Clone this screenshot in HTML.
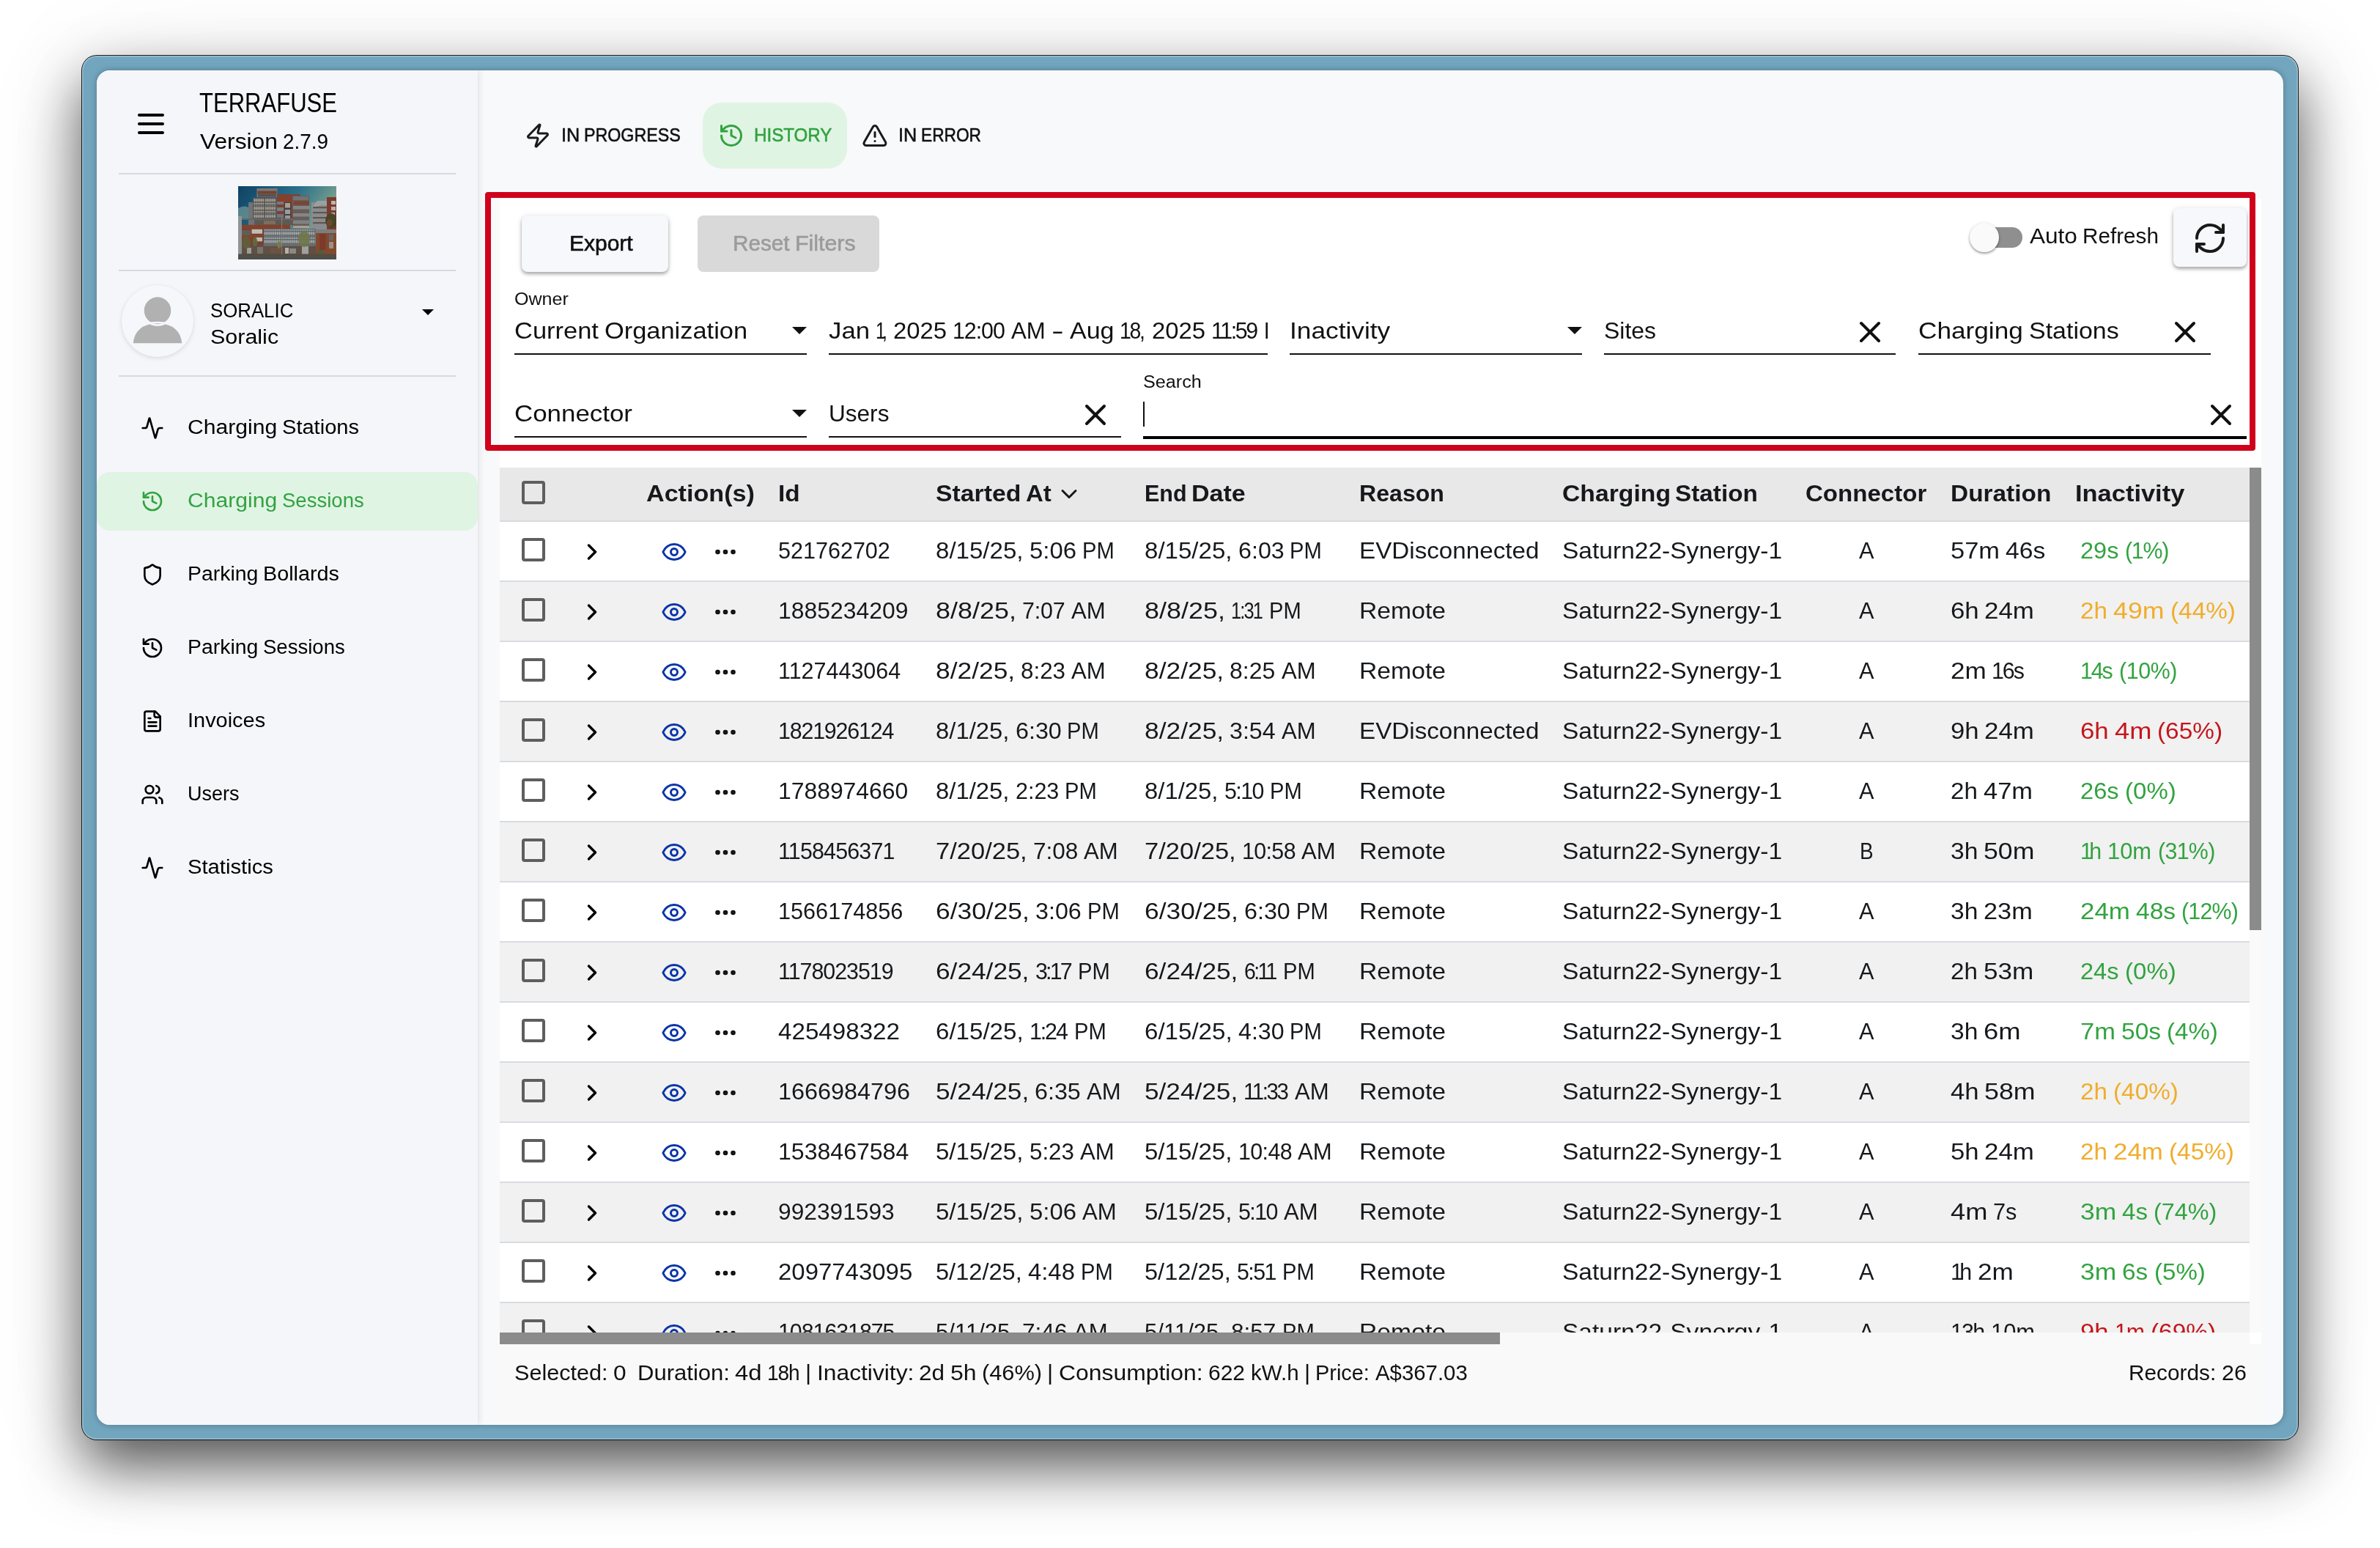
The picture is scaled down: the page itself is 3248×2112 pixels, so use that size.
<!DOCTYPE html>
<html lang="en"><head><meta charset="utf-8"><title>Charging Sessions - History</title>
<style>
html,body{margin:0;padding:0;background:#fff}
#root{position:relative;width:3248px;height:2112px;overflow:hidden;background:#fff;font-family:"Liberation Sans",sans-serif}
#root div,svg.ic,span.t{position:absolute}
span.t{white-space:pre;line-height:1;transform-origin:0 50%;display:block}
.win{left:112px;top:76px;width:3024px;height:1888px;border-radius:20px;background:#72a6bf;
 box-shadow:0 0 0 1px rgba(0,0,0,.88),inset 0 0 0 1.500px rgba(255,255,255,.30),0 36px 80px rgba(0,0,0,.67),0 0 180px rgba(0,0,0,.055)}
.app{left:132px;top:96px;width:2984px;height:1848px;border-radius:18px;overflow:hidden;background:#f8f9fa;box-shadow:0 0 10px rgba(0,0,0,.28)}
</style></head>
<body>
<div id="root">
<div class="win"></div>
<div class="app">
<div class="sb" style="left:0px;top:0px;width:520px;height:1848px;background:#f5f6fa;box-shadow:2px 0 8px rgba(0,0,0,.10)"></div><svg class="ic" style="left:50.00px;top:49.00px" width="48" height="48" viewBox="0 0 24 24" fill="none" stroke="#000" stroke-width="2" stroke-linecap="round" stroke-linejoin="round"><path d="M4 12h16"/><path d="M4 6h16"/><path d="M4 18h16"/></svg><span class="t" style="left:140.00px;top:26px;font-size:37.08px;font-weight:400;color:#000;transform:scaleX(0.8373);">TERRAFUSE</span><span class="t" style="left:140.50px;top:82px;font-size:29.36px;font-weight:400;color:#000;transform:scaleX(1.0817);">Version </span><span class="t" style="left:254.05px;top:82px;font-size:29.36px;font-weight:400;color:#000;transform:scaleX(0.9474);">2.7.9</span><div style="left:30px;top:140px;width:460px;height:2px;background:#d6d9df"></div><div style="left:30px;top:272px;width:460px;height:2px;background:#d6d9df"></div><div style="left:30px;top:416px;width:460px;height:2px;background:#d6d9df"></div><svg class="ic" style="left:193px;top:158px" width="134" height="100" viewBox="0 0 134 100">
<defs><linearGradient id="sky" x1="0" y1="0" x2="1" y2=".55"><stop offset="0" stop-color="#0c466f"/><stop offset=".5" stop-color="#2f7f9a"/><stop offset=".8" stop-color="#7fae9f"/><stop offset="1" stop-color="#c9c58e"/></linearGradient>
<pattern id="w1" width="3" height="5.500" patternUnits="userSpaceOnUse"><rect width="3" height="5.500" fill="#55585d"/><rect x=".4" y=".5" width="2.200" height="4.200" fill="#c7b8a6"/></pattern>
<pattern id="w2" width="2.900" height="5.600" patternUnits="userSpaceOnUse"><rect width="2.900" height="5.600" fill="#5d6166"/><rect x=".5" y=".6" width="1.900" height="4.300" fill="#cdd0d2"/></pattern><filter id="bl" x="0" y="0" width="1" height="1"><feGaussianBlur stdDeviation=".45"/></filter></defs>
<g filter="url(#bl)"><rect width="134" height="100" fill="url(#sky)"/>
<path d="M0 30q10-6 18 2v14H0z" fill="#9fc4b4" opacity=".55"/>
<rect x="100" y="22" width="24" height="40" fill="#9c9fa2"/><path d="M100 30l8-10h16v6h-12z" fill="#b1b4b6"/>
<rect x="102" y="28" width="20" height="2.200" fill="#6e6058"/><rect x="102" y="35" width="20" height="2.200" fill="#6e6058"/><rect x="102" y="42" width="20" height="2.200" fill="#6e6058"/><rect x="102" y="49" width="20" height="2.200" fill="#6e6058"/>
<rect x="121" y="15" width="13" height="50" fill="#8a3f30"/><rect x="127" y="20" width="6" height="5" fill="#d6cfc9"/><rect x="127" y="28" width="6" height="5" fill="#d0c9c3"/><rect x="127" y="36" width="5" height="4" fill="#cfc8c2"/>
<rect x="14" y="22" width="8" height="32" fill="#7d8185"/>
<rect x="25.500" y="3" width="28" height="12" fill="#84878b"/><rect x="26.500" y="6.500" width="26" height="3.800" fill="#8a4632"/><rect x="27" y="10.500" width="25" height="4" fill="#5f5a55"/>
<rect x="20" y="15.500" width="32.500" height="29" fill="#585b60"/><rect x="21" y="16.500" width="30.500" height="27" fill="url(#w1)"/>
<rect x="20" y="24.800" width="32.500" height="1.600" fill="#6b6e72"/><rect x="20" y="35.800" width="32.500" height="1.600" fill="#6b6e72"/><rect x="35.300" y="15.500" width="1.300" height="29" fill="#55585d"/>
<rect x="53" y="11" width="32" height="34" fill="#8c4533"/><rect x="54" y="11" width="20" height="10" fill="#95462f"/>
<rect x="53" y="21" width="9" height="4" fill="#85888b"/><rect x="53" y="29" width="9" height="5" fill="#8b8e91"/><rect x="53" y="38" width="9" height="5" fill="#7f8386"/>
<rect x="63" y="22" width="9" height="22" fill="#45484d"/><rect x="64" y="23" width="7" height="6.500" fill="#bfb2a5"/><rect x="64" y="32" width="7" height="6" fill="#aeb0b4"/><rect x="64" y="40" width="7" height="4" fill="#a9abb0"/>
<rect x="74" y="13" width="23" height="42" fill="#74665c"/><rect x="75" y="14" width="21" height="5" fill="#7e8185"/><rect x="76" y="20.500" width="21" height="5" fill="#8a4a36"/>
<rect x="75" y="27" width="23" height="4.500" fill="#94979a"/><rect x="75" y="37" width="23" height="4.500" fill="#94979a"/><rect x="75" y="46.500" width="23" height="5" fill="#8e9194"/>
<rect x="0" y="44" width="74" height="2" fill="#6f7377"/><rect x="0" y="41" width="5" height="52" fill="#a4a7a9"/>
<rect x="22" y="46" width="52" height="7" fill="#6b625b"/><rect x="35" y="47" width="16" height="5" fill="#8d7a63"/>
<rect x="5" y="52.700" width="66" height="5.500" fill="#93492f"/>
<rect x="5" y="58" width="30" height="24" fill="#8a4431"/><rect x="5" y="60" width="12" height="7" fill="#6d6762"/>
<rect x="18.500" y="58.800" width="14.500" height="6" fill="#ddd5cc"/><rect x="24.500" y="69.800" width="8.500" height="5.500" fill="#dad2c9"/><rect x="5" y="67" width="28" height="3" fill="#954a31"/>
<rect x="34.500" y="58" width="71" height="22" fill="#5d6166"/><rect x="35.300" y="58.800" width="69.500" height="9.700" fill="url(#w2)"/><rect x="35.300" y="69.700" width="69.500" height="9.700" fill="url(#w2)"/>
<rect x="75" y="54" width="22" height="3" fill="#bdb4a6"/>
<rect x="106" y="59" width="28" height="5" fill="#8b8d90"/><rect x="106" y="64" width="28" height="30" fill="#94502f"/><rect x="111" y="65" width="8.500" height="22" fill="#8b3e2c"/><rect x="124" y="66" width="6" height="8" fill="#77706a"/><rect x="124" y="76" width="6" height="9" fill="#a9a39c"/>
<rect x="5" y="80" width="101" height="13" fill="#6a574b"/><rect x="34.500" y="80" width="71" height="1.800" fill="#777a7d"/>
<rect x="64" y="84" width="5" height="8" fill="#cfc9c1"/><rect x="70" y="85" width="9" height="7" fill="#9b9a99"/><rect x="87" y="82" width="9" height="11" fill="#b5b5b4"/><rect x="26" y="83" width="8" height="9" fill="#8c7f78"/><rect x="12" y="84" width="6" height="8" fill="#b4b1ad"/><rect x="44" y="84" width="14" height="8" fill="#7a5a49"/>
<rect x="0" y="92.500" width="134" height="2.500" fill="#5d5449"/><rect x="0" y="95" width="134" height="5" fill="#58544f"/>
<ellipse cx="127" cy="47" rx="8" ry="10" fill="#4e4a2c"/><ellipse cx="125" cy="50" rx="4" ry="5" fill="#7a4f2b"/>
<ellipse cx="90" cy="72" rx="8" ry="11" fill="#7c8550" opacity=".9"/><ellipse cx="11" cy="77" rx="6" ry="8" fill="#6b6a3f" opacity=".9"/><ellipse cx="23" cy="76" rx="3.500" ry="6" fill="#6f7a45" opacity=".85"/><ellipse cx="56" cy="80" rx="3" ry="5" fill="#8a8a4c" opacity=".85"/><ellipse cx="113" cy="90" rx="4" ry="3" fill="#55683c"/>
<rect x="59.300" y="42" width=".8" height="51" fill="#9a9c9e"/>
<rect width="134" height="100" fill="#1d2026" opacity=".14"/></g>
</svg><div style="left:34px;top:293px;width:98px;height:98px;border-radius:50%;background:#f6f7fa;box-shadow:0 2px 6px rgba(0,0,0,.10),0 0 2px rgba(0,0,0,.06);overflow:hidden"><svg class="ic" style="left:0;top:0" width="98" height="98" viewBox="0 0 96 96"><circle cx="48" cy="34" r="18" fill="#b1b1b1"/><path d="M14 79c1-18 13-29 34-29s33 11 34 29z" fill="#b1b1b1" stroke="#f6f7fa" stroke-width="2.500"/><circle cx="48" cy="34" r="19.500" fill="none" stroke="#f6f7fa" stroke-width="2.500"/></svg></div><span class="t" style="left:154.50px;top:313px;font-size:28.43px;font-weight:400;color:#000;transform:scaleX(0.9078);">SORALIC</span><span class="t" style="left:154.50px;top:349px;font-size:28.43px;font-weight:400;color:#000;transform:scaleX(1.0719);">Soralic</span><svg class="ic" style="left:444px;top:326px" width="16" height="8" viewBox="0 0 16 8"><path d="M0 0h16l-8 8z" fill="#000"/></svg><svg class="ic" style="left:60.00px;top:472.00px" width="32" height="32" viewBox="0 0 24 24" fill="none" stroke="#000" stroke-width="2" stroke-linecap="round" stroke-linejoin="round"><path d="M22 12h-2.48a2 2 0 0 0-1.93 1.46l-2.35 8.36a.25.25 0 0 1-.48 0L9.24 2.18a.25.25 0 0 0-.48 0l-2.35 8.36A2 2 0 0 1 4.49 12H2"/></svg><span class="t" style="left:124.00px;top:474px;font-size:26.78px;font-weight:400;color:#000;transform:scaleX(1.1249);">Charging </span><span class="t" style="left:253.12px;top:474px;font-size:26.78px;font-weight:400;color:#000;transform:scaleX(1.0858);">Stations</span><div style="left:0px;top:548px;width:520px;height:80px;background:#e0f4e4;border-radius:18px"></div><svg class="ic" style="left:60.00px;top:572.00px" width="32" height="32" viewBox="0 0 24 24" fill="none" stroke="#32a340" stroke-width="2" stroke-linecap="round" stroke-linejoin="round"><path d="M3 12a9 9 0 1 0 9-9 9.75 9.75 0 0 0-6.74 2.74L3 8"/><path d="M3 3v5h5"/><path d="M12 7v5l4 2"/></svg><span class="t" style="left:124.00px;top:574px;font-size:26.78px;font-weight:400;color:#32a340;transform:scaleX(1.1249);">Charging </span><span class="t" style="left:253.12px;top:574px;font-size:26.78px;font-weight:400;color:#32a340;transform:scaleX(1.0292);">Sessions</span><svg class="ic" style="left:60.00px;top:672.00px" width="32" height="32" viewBox="0 0 24 24" fill="none" stroke="#000" stroke-width="2" stroke-linecap="round" stroke-linejoin="round"><path d="M20 13c0 5-3.5 7.5-7.66 8.95a1 1 0 0 1-.67-.01C7.5 20.5 4 18 4 13V6a1 1 0 0 1 1-1c2 0 4.500-1.200 6.240-2.720a1.170 1.170 0 0 1 1.520 0C14.510 3.810 17 5 19 5a1 1 0 0 1 1 1z"/></svg><span class="t" style="left:124.00px;top:674px;font-size:26.78px;font-weight:400;color:#000;transform:scaleX(1.0615);">Parking </span><span class="t" style="left:227.28px;top:674px;font-size:26.78px;font-weight:400;color:#000;transform:scaleX(1.0734);">Bollards</span><svg class="ic" style="left:60.00px;top:772.00px" width="32" height="32" viewBox="0 0 24 24" fill="none" stroke="#000" stroke-width="2" stroke-linecap="round" stroke-linejoin="round"><path d="M3 12a9 9 0 1 0 9-9 9.75 9.75 0 0 0-6.74 2.74L3 8"/><path d="M3 3v5h5"/><path d="M12 7v5l4 2"/></svg><span class="t" style="left:124.00px;top:774px;font-size:26.78px;font-weight:400;color:#000;transform:scaleX(1.0615);">Parking </span><span class="t" style="left:227.28px;top:774px;font-size:26.78px;font-weight:400;color:#000;transform:scaleX(1.0292);">Sessions</span><svg class="ic" style="left:60.00px;top:872.00px" width="32" height="32" viewBox="0 0 24 24" fill="none" stroke="#000" stroke-width="2" stroke-linecap="round" stroke-linejoin="round"><path d="M15 2H6a2 2 0 0 0-2 2v16a2 2 0 0 0 2 2h12a2 2 0 0 0 2-2V7Z"/><path d="M14 2v4a2 2 0 0 0 2 2h4"/><path d="M10 9H8"/><path d="M16 13H8"/><path d="M16 17H8"/></svg><span class="t" style="left:124.00px;top:874px;font-size:26.78px;font-weight:400;color:#000;transform:scaleX(1.0808);">Invoices</span><svg class="ic" style="left:60.00px;top:972.00px" width="32" height="32" viewBox="0 0 24 24" fill="none" stroke="#000" stroke-width="2" stroke-linecap="round" stroke-linejoin="round"><path d="M16 21v-2a4 4 0 0 0-4-4H6a4 4 0 0 0-4 4v2"/><circle cx="9" cy="7" r="4"/><path d="M22 21v-2a4 4 0 0 0-3-3.870"/><path d="M16 3.130a4 4 0 0 1 0 7.750"/></svg><span class="t" style="left:124.00px;top:974px;font-size:26.78px;font-weight:400;color:#000;transform:scaleX(1.0087);">Users</span><svg class="ic" style="left:60.00px;top:1072.00px" width="32" height="32" viewBox="0 0 24 24" fill="none" stroke="#000" stroke-width="2" stroke-linecap="round" stroke-linejoin="round"><path d="M22 12h-2.48a2 2 0 0 0-1.93 1.46l-2.35 8.36a.25.25 0 0 1-.48 0L9.24 2.18a.25.25 0 0 0-.48 0l-2.35 8.36A2 2 0 0 1 4.49 12H2"/></svg><span class="t" style="left:124.00px;top:1074px;font-size:26.78px;font-weight:400;color:#000;transform:scaleX(1.0921);">Statistics</span><svg class="ic" style="left:584.00px;top:71.00px" width="36" height="36" viewBox="0 0 24 24" fill="none" stroke="#1a1a1a" stroke-width="2" stroke-linecap="round" stroke-linejoin="round"><path d="M4 14a1 1 0 0 1-.78-1.630l9.900-10.200a.5.5 0 0 1 .86.460l-1.920 6.020A1 1 0 0 0 13 10h7a1 1 0 0 1 .78 1.630l-9.900 10.200a.5.5 0 0 1-.86-.460l1.920-6.020A1 1 0 0 0 11 14z"/></svg><span class="t" style="left:633.50px;top:75px;font-size:26.37px;font-weight:400;color:#111;transform:scaleX(0.9562);-webkit-text-stroke:.6px #111;">IN </span><span class="t" style="left:665.38px;top:75px;font-size:26.37px;font-weight:400;color:#111;transform:scaleX(0.8819);-webkit-text-stroke:.6px #111;">PROGRESS</span><div style="left:827px;top:44px;width:197px;height:90px;background:#e0f4e4;border-radius:26px"></div><svg class="ic" style="left:848.00px;top:71.00px" width="36" height="36" viewBox="0 0 24 24" fill="none" stroke="#32a340" stroke-width="2" stroke-linecap="round" stroke-linejoin="round"><path d="M3 12a9 9 0 1 0 9-9 9.75 9.75 0 0 0-6.74 2.74L3 8"/><path d="M3 3v5h5"/><path d="M12 7v5l4 2"/></svg><span class="t" style="left:897.00px;top:75px;font-size:26.37px;font-weight:400;color:#32a340;transform:scaleX(0.9157);-webkit-text-stroke:.6px #32a340;">HISTORY</span><svg class="ic" style="left:1044.00px;top:71.00px" width="36" height="36" viewBox="0 0 24 24" fill="none" stroke="#1a1a1a" stroke-width="2" stroke-linecap="round" stroke-linejoin="round"><path d="m21.730 18-8-14a2 2 0 0 0-3.480 0l-8 14A2 2 0 0 0 4 21h16a2 2 0 0 0 1.730-3"/><path d="M12 9v4"/><path d="M12 17h.01"/></svg><span class="t" style="left:1093.50px;top:75px;font-size:26.37px;font-weight:400;color:#111;transform:scaleX(0.9562);-webkit-text-stroke:.6px #111;">IN </span><span class="t" style="left:1125.38px;top:75px;font-size:26.37px;font-weight:400;color:#111;transform:scaleX(0.8615);-webkit-text-stroke:.6px #111;">ERROR</span><div style="left:550px;top:176px;width:2404px;height:1562px;background:#fff"></div><div style="left:580px;top:198px;width:200px;height:77px;background:#f7f8fb;border-radius:8px;box-shadow:0 3px 4px rgba(0,0,0,.28),0 1px 8px rgba(0,0,0,.12)"></div><span class="t" style="left:645.16px;top:222px;font-size:28.84px;font-weight:400;color:#111;transform:scaleX(1.0401);-webkit-text-stroke:.6px #111;">Export</span><div style="left:820px;top:198px;width:248px;height:77px;background:#d9d9d9;border-radius:8px"></div><span class="t" style="left:868.25px;top:222px;font-size:28.84px;font-weight:400;color:#9b9b9b;transform:scaleX(1.0307);-webkit-text-stroke:.6px #9b9b9b;">Reset </span><span class="t" style="left:953.16px;top:222px;font-size:28.84px;font-weight:400;color:#9b9b9b;transform:scaleX(1.0526);-webkit-text-stroke:.6px #9b9b9b;">Filters</span><div style="left:2560px;top:214px;width:68px;height:28px;background:#8f8f8f;border-radius:14px"></div><div style="left:2556px;top:208px;width:40px;height:40px;background:#fafafa;border-radius:50%;box-shadow:0 2px 3px rgba(0,0,0,.3),0 1px 5px rgba(0,0,0,.14)"></div><span class="t" style="left:2638.00px;top:212px;font-size:28.84px;font-weight:400;color:#111;transform:scaleX(1.0943);">Auto </span><span class="t" style="left:2710.39px;top:212px;font-size:28.84px;font-weight:400;color:#111;transform:scaleX(1.0296);">Refresh</span><div style="left:2834px;top:188px;width:100px;height:80px;background:#f7f8fb;border-radius:8px;box-shadow:0 3px 4px rgba(0,0,0,.28),0 1px 8px rgba(0,0,0,.12)"></div><svg class="ic" style="left:2860.00px;top:204.50px" width="48" height="48" viewBox="0 0 24 24" fill="none" stroke="#1a1a1a" stroke-width="2" stroke-linecap="round" stroke-linejoin="round"><path d="M3 12a9 9 0 0 1 9-9 9.750 9.750 0 0 1 6.740 2.740L21 8"/><path d="M21 3v5h-5"/><path d="M21 12a9 9 0 0 1-9 9 9.750 9.750 0 0 1-6.740-2.740L3 16"/><path d="M8 16H3v5"/></svg><div style="left:570px;top:386px;width:399px;height:2px;background:#111"></div><span class="t" style="left:570.00px;top:340px;font-size:31.31px;font-weight:400;color:#111;transform:scaleX(1.1015);">Current </span><span class="t" style="left:693.06px;top:340px;font-size:31.31px;font-weight:400;color:#111;transform:scaleX(1.0992);">Organization</span><span class="t" style="left:570.00px;top:301px;font-size:23.48px;font-weight:400;color:#111;transform:scaleX(1.0683);">Owner</span><svg class="ic" style="left:949px;top:349.5px" width="20" height="10" viewBox="0 0 20 10"><path d="M0 0h20l-10 10z" fill="#111"/></svg><div style="left:999px;top:386px;width:599px;height:2px;background:#111"></div><div style="left:999px;top:324px;width:599px;height:60px;overflow:hidden"><span class="t" style="left:0.00px;top:16px;font-size:31.31px;font-weight:400;color:#111;transform:scaleX(1.1118);">Jan </span><span class="t" style="left:64.22px;top:16px;font-size:31.31px;font-weight:400;color:#111;transform:scaleX(0.7811);letter-spacing:-5.95px;">1, </span><span class="t" style="left:88.08px;top:16px;font-size:31.31px;font-weight:400;color:#111;transform:scaleX(1.0503);">2025 </span><span class="t" style="left:169.31px;top:16px;font-size:31.31px;font-weight:400;color:#111;transform:scaleX(0.9711);letter-spacing:-1.09px;">12:00 </span><span class="t" style="left:249.27px;top:16px;font-size:31.31px;font-weight:400;color:#111;transform:scaleX(0.9937);">AM </span><span class="t" style="left:304.03px;top:16px;font-size:31.31px;font-weight:400;color:#111;transform:scaleX(1.6048);">- </span><span class="t" style="left:328.89px;top:16px;font-size:31.31px;font-weight:400;color:#111;transform:scaleX(1.0861);">Aug </span><span class="t" style="left:397.48px;top:16px;font-size:31.31px;font-weight:400;color:#111;transform:scaleX(0.9078);letter-spacing:-2.52px;">18, </span><span class="t" style="left:440.52px;top:16px;font-size:31.31px;font-weight:400;color:#111;transform:scaleX(1.0503);">2025 </span><span class="t" style="left:521.75px;top:16px;font-size:31.31px;font-weight:400;color:#111;transform:scaleX(0.9711);letter-spacing:-2.48px;">11:59 </span><span class="t" style="left:594.03px;top:16px;font-size:31.31px;font-weight:400;color:#111;transform:scaleX(0.9321);">PM</span></div><div style="left:1628px;top:386px;width:399px;height:2px;background:#111"></div><span class="t" style="left:1628.00px;top:340px;font-size:31.31px;font-weight:400;color:#111;transform:scaleX(1.1265);">Inactivity</span><svg class="ic" style="left:2007px;top:349.5px" width="20" height="10" viewBox="0 0 20 10"><path d="M0 0h20l-10 10z" fill="#111"/></svg><div style="left:2057px;top:386px;width:398px;height:2px;background:#111"></div><span class="t" style="left:2057.00px;top:340px;font-size:31.31px;font-weight:400;color:#111;transform:scaleX(1.0218);">Sites</span><svg class="ic" style="left:2396.00px;top:332.50px" width="48" height="48" viewBox="0 0 24 24" fill="none" stroke="#111" stroke-width="2" stroke-linecap="round" stroke-linejoin="round"><path d="M18 6 6 18"/><path d="m6 6 12 12"/></svg><div style="left:2486px;top:386px;width:399px;height:2px;background:#111"></div><span class="t" style="left:2486.00px;top:340px;font-size:31.31px;font-weight:400;color:#111;transform:scaleX(1.1244);">Charging </span><span class="t" style="left:2636.92px;top:340px;font-size:31.31px;font-weight:400;color:#111;transform:scaleX(1.0854);">Stations</span><svg class="ic" style="left:2826.00px;top:332.50px" width="48" height="48" viewBox="0 0 24 24" fill="none" stroke="#111" stroke-width="2" stroke-linecap="round" stroke-linejoin="round"><path d="M18 6 6 18"/><path d="m6 6 12 12"/></svg><div style="left:570px;top:499px;width:399px;height:2px;background:#111"></div><span class="t" style="left:570.00px;top:453px;font-size:31.31px;font-weight:400;color:#111;transform:scaleX(1.1146);">Connector</span><svg class="ic" style="left:949px;top:462.5px" width="20" height="10" viewBox="0 0 20 10"><path d="M0 0h20l-10 10z" fill="#111"/></svg><div style="left:999px;top:499px;width:399px;height:2px;background:#111"></div><span class="t" style="left:999.00px;top:453px;font-size:31.31px;font-weight:400;color:#111;transform:scaleX(1.0084);">Users</span><svg class="ic" style="left:1339.00px;top:445.50px" width="48" height="48" viewBox="0 0 24 24" fill="none" stroke="#111" stroke-width="2" stroke-linecap="round" stroke-linejoin="round"><path d="M18 6 6 18"/><path d="m6 6 12 12"/></svg><div style="left:1428px;top:499px;width:1506px;height:4px;background:#000"></div><span class="t" style="left:1428.00px;top:414px;font-size:23.48px;font-weight:400;color:#111;transform:scaleX(1.0737);">Search</span><svg class="ic" style="left:2875.00px;top:446.00px" width="48" height="48" viewBox="0 0 24 24" fill="none" stroke="#111" stroke-width="2" stroke-linecap="round" stroke-linejoin="round"><path d="M18 6 6 18"/><path d="m6 6 12 12"/></svg><div style="left:1428px;top:452px;width:2px;height:34px;background:#111"></div><div class="tbl" style="left:550px;top:542px;width:2388px;height:1180px;overflow:hidden"><div style="left:0px;top:0px;width:2388px;height:72px;background:#e8e8e8"></div><div style="left:0px;top:72px;width:2388px;height:2px;background:#d9dbe1"></div><div style="left:30px;top:18px;width:32px;height:32px;border:4px solid #5e5e5e;border-radius:4px;box-sizing:border-box"></div><span class="t" style="left:200.00px;top:20px;font-size:31.31px;font-weight:700;color:#16181b;transform:scaleX(1.0904);">Action(s)</span><span class="t" style="left:380.00px;top:20px;font-size:31.31px;font-weight:700;color:#16181b;transform:scaleX(1.0640);">Id</span><span class="t" style="left:595.00px;top:20px;font-size:31.31px;font-weight:700;color:#16181b;transform:scaleX(1.0793);">Started </span><span class="t" style="left:717.81px;top:20px;font-size:31.31px;font-weight:700;color:#16181b;transform:scaleX(1.0520);">At</span><svg class="ic" style="left:759.00px;top:18.00px" width="36" height="36" viewBox="0 0 24 24" fill="none" stroke="#16181b" stroke-width="2" stroke-linecap="round" stroke-linejoin="round"><path d="m6 9 6 6 6-6"/></svg><span class="t" style="left:880.00px;top:20px;font-size:31.31px;font-weight:700;color:#16181b;transform:scaleX(0.9736);">End </span><span class="t" style="left:944.02px;top:20px;font-size:31.31px;font-weight:700;color:#16181b;transform:scaleX(1.0877);">Date</span><span class="t" style="left:1172.50px;top:20px;font-size:31.31px;font-weight:700;color:#16181b;transform:scaleX(1.0258);">Reason</span><span class="t" style="left:1450.00px;top:20px;font-size:31.31px;font-weight:700;color:#16181b;transform:scaleX(1.0776);">Charging </span><span class="t" style="left:1604.45px;top:20px;font-size:31.31px;font-weight:700;color:#16181b;transform:scaleX(1.0636);">Station</span><span class="t" style="left:1782.35px;top:20px;font-size:31.31px;font-weight:700;color:#16181b;transform:scaleX(1.0562);">Connector</span><span class="t" style="left:1979.50px;top:20px;font-size:31.31px;font-weight:700;color:#16181b;transform:scaleX(1.0676);">Duration</span><span class="t" style="left:2150.00px;top:20px;font-size:31.31px;font-weight:700;color:#16181b;transform:scaleX(1.1005);">Inactivity</span><div style="left:0px;top:74px;width:2388px;height:80px;background:#fff"></div><div style="left:0px;top:154px;width:2388px;height:2px;background:#d9dbe1"></div><div style="left:30px;top:96px;width:32px;height:32px;border:4px solid #5e5e5e;border-radius:4px;box-sizing:border-box"></div><svg class="ic" style="left:108.00px;top:97.00px" width="36" height="36" viewBox="0 0 24 24" fill="none" stroke="#000" stroke-width="2.3" stroke-linecap="round" stroke-linejoin="round"><path d="m9 18 6-6-6-6"/></svg><svg class="ic" style="left:220.00px;top:97.00px" width="36" height="36" viewBox="0 0 24 24" fill="none" stroke="#0a35a8" stroke-width="2" stroke-linecap="round" stroke-linejoin="round"><path d="M2.062 12.348a1 1 0 0 1 0-.696 10.750 10.750 0 0 1 19.876 0 1 1 0 0 1 0 .696 10.750 10.750 0 0 1-19.876 0"/><circle cx="12" cy="12" r="3"/></svg><svg class="ic" style="left:290.00px;top:97.00px" width="36" height="36" viewBox="0 0 24 24" fill="none" stroke="#111" stroke-width="2.4" stroke-linecap="round" stroke-linejoin="round"><circle cx="12" cy="12" r="1"/><circle cx="19" cy="12" r="1"/><circle cx="5" cy="12" r="1"/></svg><span class="t" style="left:380.00px;top:98px;font-size:31.31px;font-weight:400;color:#16181b;transform:scaleX(0.9755);">521762702</span><span class="t" style="left:595.00px;top:98px;font-size:31.31px;font-weight:400;color:#16181b;transform:scaleX(1.0564);">8/15/25, </span><span class="t" style="left:722.62px;top:98px;font-size:31.31px;font-weight:400;color:#16181b;transform:scaleX(1.0498);">5:06 </span><span class="t" style="left:794.67px;top:98px;font-size:31.31px;font-weight:400;color:#16181b;transform:scaleX(0.9321);">PM</span><span class="t" style="left:880.00px;top:98px;font-size:31.31px;font-weight:400;color:#16181b;transform:scaleX(1.0564);">8/15/25, </span><span class="t" style="left:1007.62px;top:98px;font-size:31.31px;font-weight:400;color:#16181b;transform:scaleX(1.0303);">6:03 </span><span class="t" style="left:1078.48px;top:98px;font-size:31.31px;font-weight:400;color:#16181b;transform:scaleX(0.9321);">PM</span><span class="t" style="left:1172.50px;top:98px;font-size:31.31px;font-weight:400;color:#16181b;transform:scaleX(1.0610);">EVDisconnected</span><span class="t" style="left:1450.00px;top:98px;font-size:31.31px;font-weight:400;color:#16181b;transform:scaleX(1.0714);">Saturn22-Synergy-1</span><span class="t" style="left:1854.76px;top:98px;font-size:31.31px;font-weight:400;color:#16181b;transform:scaleX(0.9813);">A</span><span class="t" style="left:1979.50px;top:98px;font-size:31.31px;font-weight:400;color:#16181b;transform:scaleX(1.1001);">57m </span><span class="t" style="left:2054.61px;top:98px;font-size:31.31px;font-weight:400;color:#16181b;transform:scaleX(1.0755);">46s</span><span class="t" style="left:2157.00px;top:98px;font-size:31.31px;font-weight:400;color:#32a340;transform:scaleX(1.0402);">29s </span><span class="t" style="left:2217.61px;top:98px;font-size:31.31px;font-weight:400;color:#32a340;transform:scaleX(0.9711);letter-spacing:-1.30px;">(1%)</span><div style="left:0px;top:156px;width:2388px;height:80px;background:#f1f1f1"></div><div style="left:0px;top:236px;width:2388px;height:2px;background:#d9dbe1"></div><div style="left:30px;top:178px;width:32px;height:32px;border:4px solid #5e5e5e;border-radius:4px;box-sizing:border-box"></div><svg class="ic" style="left:108.00px;top:179.00px" width="36" height="36" viewBox="0 0 24 24" fill="none" stroke="#000" stroke-width="2.3" stroke-linecap="round" stroke-linejoin="round"><path d="m9 18 6-6-6-6"/></svg><svg class="ic" style="left:220.00px;top:179.00px" width="36" height="36" viewBox="0 0 24 24" fill="none" stroke="#0a35a8" stroke-width="2" stroke-linecap="round" stroke-linejoin="round"><path d="M2.062 12.348a1 1 0 0 1 0-.696 10.750 10.750 0 0 1 19.876 0 1 1 0 0 1 0 .696 10.750 10.750 0 0 1-19.876 0"/><circle cx="12" cy="12" r="3"/></svg><svg class="ic" style="left:290.00px;top:179.00px" width="36" height="36" viewBox="0 0 24 24" fill="none" stroke="#111" stroke-width="2.4" stroke-linecap="round" stroke-linejoin="round"><circle cx="12" cy="12" r="1"/><circle cx="19" cy="12" r="1"/><circle cx="5" cy="12" r="1"/></svg><span class="t" style="left:380.00px;top:180px;font-size:31.31px;font-weight:400;color:#16181b;transform:scaleX(1.0190);">1885234209</span><span class="t" style="left:595.00px;top:180px;font-size:31.31px;font-weight:400;color:#16181b;transform:scaleX(1.1479);">8/8/25, </span><span class="t" style="left:712.98px;top:180px;font-size:31.31px;font-weight:400;color:#16181b;transform:scaleX(0.9711);letter-spacing:-0.14px;">7:07 </span><span class="t" style="left:779.84px;top:180px;font-size:31.31px;font-weight:400;color:#16181b;transform:scaleX(0.9937);">AM</span><span class="t" style="left:880.00px;top:180px;font-size:31.31px;font-weight:400;color:#16181b;transform:scaleX(1.1479);">8/8/25, </span><span class="t" style="left:997.98px;top:180px;font-size:31.31px;font-weight:400;color:#16181b;transform:scaleX(0.8128);letter-spacing:-2.33px;">1:31 </span><span class="t" style="left:1049.92px;top:180px;font-size:31.31px;font-weight:400;color:#16181b;transform:scaleX(0.9321);">PM</span><span class="t" style="left:1172.50px;top:180px;font-size:31.31px;font-weight:400;color:#16181b;transform:scaleX(1.0766);">Remote</span><span class="t" style="left:1450.00px;top:180px;font-size:31.31px;font-weight:400;color:#16181b;transform:scaleX(1.0714);">Saturn22-Synergy-1</span><span class="t" style="left:1854.76px;top:180px;font-size:31.31px;font-weight:400;color:#16181b;transform:scaleX(0.9813);">A</span><span class="t" style="left:1979.50px;top:180px;font-size:31.31px;font-weight:400;color:#16181b;transform:scaleX(1.1131);">6h </span><span class="t" style="left:2026.38px;top:180px;font-size:31.31px;font-weight:400;color:#16181b;transform:scaleX(1.1152);">24m</span><span class="t" style="left:2157.00px;top:180px;font-size:31.31px;font-weight:400;color:#f0ad2c;transform:scaleX(1.0610);">2h </span><span class="t" style="left:2202.05px;top:180px;font-size:31.31px;font-weight:400;color:#f0ad2c;transform:scaleX(1.1427);">49m </span><span class="t" style="left:2279.72px;top:180px;font-size:31.31px;font-weight:400;color:#f0ad2c;transform:scaleX(1.0649);">(44%)</span><div style="left:0px;top:238px;width:2388px;height:80px;background:#fff"></div><div style="left:0px;top:318px;width:2388px;height:2px;background:#d9dbe1"></div><div style="left:30px;top:260px;width:32px;height:32px;border:4px solid #5e5e5e;border-radius:4px;box-sizing:border-box"></div><svg class="ic" style="left:108.00px;top:261.00px" width="36" height="36" viewBox="0 0 24 24" fill="none" stroke="#000" stroke-width="2.3" stroke-linecap="round" stroke-linejoin="round"><path d="m9 18 6-6-6-6"/></svg><svg class="ic" style="left:220.00px;top:261.00px" width="36" height="36" viewBox="0 0 24 24" fill="none" stroke="#0a35a8" stroke-width="2" stroke-linecap="round" stroke-linejoin="round"><path d="M2.062 12.348a1 1 0 0 1 0-.696 10.750 10.750 0 0 1 19.876 0 1 1 0 0 1 0 .696 10.750 10.750 0 0 1-19.876 0"/><circle cx="12" cy="12" r="3"/></svg><svg class="ic" style="left:290.00px;top:261.00px" width="36" height="36" viewBox="0 0 24 24" fill="none" stroke="#111" stroke-width="2.4" stroke-linecap="round" stroke-linejoin="round"><circle cx="12" cy="12" r="1"/><circle cx="19" cy="12" r="1"/><circle cx="5" cy="12" r="1"/></svg><span class="t" style="left:380.00px;top:262px;font-size:31.31px;font-weight:400;color:#16181b;transform:scaleX(0.9733);">1127443064</span><span class="t" style="left:595.00px;top:262px;font-size:31.31px;font-weight:400;color:#16181b;transform:scaleX(1.1301);">8/2/25, </span><span class="t" style="left:711.28px;top:262px;font-size:31.31px;font-weight:400;color:#16181b;transform:scaleX(1.0018);">8:23 </span><span class="t" style="left:780.42px;top:262px;font-size:31.31px;font-weight:400;color:#16181b;transform:scaleX(0.9937);">AM</span><span class="t" style="left:880.00px;top:262px;font-size:31.31px;font-weight:400;color:#16181b;transform:scaleX(1.1301);">8/2/25, </span><span class="t" style="left:996.28px;top:262px;font-size:31.31px;font-weight:400;color:#16181b;transform:scaleX(1.0213);">8:25 </span><span class="t" style="left:1066.61px;top:262px;font-size:31.31px;font-weight:400;color:#16181b;transform:scaleX(0.9937);">AM</span><span class="t" style="left:1172.50px;top:262px;font-size:31.31px;font-weight:400;color:#16181b;transform:scaleX(1.0766);">Remote</span><span class="t" style="left:1450.00px;top:262px;font-size:31.31px;font-weight:400;color:#16181b;transform:scaleX(1.0714);">Saturn22-Synergy-1</span><span class="t" style="left:1854.76px;top:262px;font-size:31.31px;font-weight:400;color:#16181b;transform:scaleX(0.9813);">A</span><span class="t" style="left:1979.50px;top:262px;font-size:31.31px;font-weight:400;color:#16181b;transform:scaleX(1.1218);">2m </span><span class="t" style="left:2036.41px;top:262px;font-size:31.31px;font-weight:400;color:#16181b;transform:scaleX(0.9711);letter-spacing:-2.12px;">16s</span><span class="t" style="left:2157.00px;top:262px;font-size:31.31px;font-weight:400;color:#32a340;transform:scaleX(0.9711);letter-spacing:-2.21px;">14s </span><span class="t" style="left:2209.83px;top:262px;font-size:31.31px;font-weight:400;color:#32a340;transform:scaleX(0.9711);letter-spacing:-0.41px;">(10%)</span><div style="left:0px;top:320px;width:2388px;height:80px;background:#f1f1f1"></div><div style="left:0px;top:400px;width:2388px;height:2px;background:#d9dbe1"></div><div style="left:30px;top:342px;width:32px;height:32px;border:4px solid #5e5e5e;border-radius:4px;box-sizing:border-box"></div><svg class="ic" style="left:108.00px;top:343.00px" width="36" height="36" viewBox="0 0 24 24" fill="none" stroke="#000" stroke-width="2.3" stroke-linecap="round" stroke-linejoin="round"><path d="m9 18 6-6-6-6"/></svg><svg class="ic" style="left:220.00px;top:343.00px" width="36" height="36" viewBox="0 0 24 24" fill="none" stroke="#0a35a8" stroke-width="2" stroke-linecap="round" stroke-linejoin="round"><path d="M2.062 12.348a1 1 0 0 1 0-.696 10.750 10.750 0 0 1 19.876 0 1 1 0 0 1 0 .696 10.750 10.750 0 0 1-19.876 0"/><circle cx="12" cy="12" r="3"/></svg><svg class="ic" style="left:290.00px;top:343.00px" width="36" height="36" viewBox="0 0 24 24" fill="none" stroke="#111" stroke-width="2.4" stroke-linecap="round" stroke-linejoin="round"><circle cx="12" cy="12" r="1"/><circle cx="19" cy="12" r="1"/><circle cx="5" cy="12" r="1"/></svg><span class="t" style="left:380.00px;top:344px;font-size:31.31px;font-weight:400;color:#16181b;transform:scaleX(0.9711);letter-spacing:-1.22px;">1821926124</span><span class="t" style="left:595.00px;top:344px;font-size:31.31px;font-weight:400;color:#16181b;transform:scaleX(1.0491);">8/1/25, </span><span class="t" style="left:703.53px;top:344px;font-size:31.31px;font-weight:400;color:#16181b;transform:scaleX(1.0303);">6:30 </span><span class="t" style="left:774.41px;top:344px;font-size:31.31px;font-weight:400;color:#16181b;transform:scaleX(0.9321);">PM</span><span class="t" style="left:880.00px;top:344px;font-size:31.31px;font-weight:400;color:#16181b;transform:scaleX(1.1301);">8/2/25, </span><span class="t" style="left:996.28px;top:344px;font-size:31.31px;font-weight:400;color:#16181b;transform:scaleX(1.0272);">3:54 </span><span class="t" style="left:1066.97px;top:344px;font-size:31.31px;font-weight:400;color:#16181b;transform:scaleX(0.9937);">AM</span><span class="t" style="left:1172.50px;top:344px;font-size:31.31px;font-weight:400;color:#16181b;transform:scaleX(1.0610);">EVDisconnected</span><span class="t" style="left:1450.00px;top:344px;font-size:31.31px;font-weight:400;color:#16181b;transform:scaleX(1.0714);">Saturn22-Synergy-1</span><span class="t" style="left:1854.76px;top:344px;font-size:31.31px;font-weight:400;color:#16181b;transform:scaleX(0.9813);">A</span><span class="t" style="left:1979.50px;top:344px;font-size:31.31px;font-weight:400;color:#16181b;transform:scaleX(1.1091);">9h </span><span class="t" style="left:2026.22px;top:344px;font-size:31.31px;font-weight:400;color:#16181b;transform:scaleX(1.1152);">24m</span><span class="t" style="left:2157.00px;top:344px;font-size:31.31px;font-weight:400;color:#c4161c;transform:scaleX(1.1131);">6h </span><span class="t" style="left:2203.88px;top:344px;font-size:31.31px;font-weight:400;color:#c4161c;transform:scaleX(1.1595);">4m </span><span class="t" style="left:2262.41px;top:344px;font-size:31.31px;font-weight:400;color:#c4161c;transform:scaleX(1.0666);">(65%)</span><div style="left:0px;top:402px;width:2388px;height:80px;background:#fff"></div><div style="left:0px;top:482px;width:2388px;height:2px;background:#d9dbe1"></div><div style="left:30px;top:424px;width:32px;height:32px;border:4px solid #5e5e5e;border-radius:4px;box-sizing:border-box"></div><svg class="ic" style="left:108.00px;top:425.00px" width="36" height="36" viewBox="0 0 24 24" fill="none" stroke="#000" stroke-width="2.3" stroke-linecap="round" stroke-linejoin="round"><path d="m9 18 6-6-6-6"/></svg><svg class="ic" style="left:220.00px;top:425.00px" width="36" height="36" viewBox="0 0 24 24" fill="none" stroke="#0a35a8" stroke-width="2" stroke-linecap="round" stroke-linejoin="round"><path d="M2.062 12.348a1 1 0 0 1 0-.696 10.750 10.750 0 0 1 19.876 0 1 1 0 0 1 0 .696 10.750 10.750 0 0 1-19.876 0"/><circle cx="12" cy="12" r="3"/></svg><svg class="ic" style="left:290.00px;top:425.00px" width="36" height="36" viewBox="0 0 24 24" fill="none" stroke="#111" stroke-width="2.4" stroke-linecap="round" stroke-linejoin="round"><circle cx="12" cy="12" r="1"/><circle cx="19" cy="12" r="1"/><circle cx="5" cy="12" r="1"/></svg><span class="t" style="left:380.00px;top:426px;font-size:31.31px;font-weight:400;color:#16181b;transform:scaleX(1.0181);">1788974660</span><span class="t" style="left:595.00px;top:426px;font-size:31.31px;font-weight:400;color:#16181b;transform:scaleX(1.0491);">8/1/25, </span><span class="t" style="left:703.53px;top:426px;font-size:31.31px;font-weight:400;color:#16181b;transform:scaleX(0.9738);">2:23 </span><span class="t" style="left:770.97px;top:426px;font-size:31.31px;font-weight:400;color:#16181b;transform:scaleX(0.9321);">PM</span><span class="t" style="left:880.00px;top:426px;font-size:31.31px;font-weight:400;color:#16181b;transform:scaleX(1.0491);">8/1/25, </span><span class="t" style="left:988.53px;top:426px;font-size:31.31px;font-weight:400;color:#16181b;transform:scaleX(0.9711);letter-spacing:-1.64px;">5:10 </span><span class="t" style="left:1051.02px;top:426px;font-size:31.31px;font-weight:400;color:#16181b;transform:scaleX(0.9321);">PM</span><span class="t" style="left:1172.50px;top:426px;font-size:31.31px;font-weight:400;color:#16181b;transform:scaleX(1.0766);">Remote</span><span class="t" style="left:1450.00px;top:426px;font-size:31.31px;font-weight:400;color:#16181b;transform:scaleX(1.0714);">Saturn22-Synergy-1</span><span class="t" style="left:1854.76px;top:426px;font-size:31.31px;font-weight:400;color:#16181b;transform:scaleX(0.9813);">A</span><span class="t" style="left:1979.50px;top:426px;font-size:31.31px;font-weight:400;color:#16181b;transform:scaleX(1.0610);">2h </span><span class="t" style="left:2024.55px;top:426px;font-size:31.31px;font-weight:400;color:#16181b;transform:scaleX(1.1006);">47m</span><span class="t" style="left:2157.00px;top:426px;font-size:31.31px;font-weight:400;color:#32a340;transform:scaleX(1.0430);">26s </span><span class="t" style="left:2217.77px;top:426px;font-size:31.31px;font-weight:400;color:#32a340;transform:scaleX(1.0556);">(0%)</span><div style="left:0px;top:484px;width:2388px;height:80px;background:#f1f1f1"></div><div style="left:0px;top:564px;width:2388px;height:2px;background:#d9dbe1"></div><div style="left:30px;top:506px;width:32px;height:32px;border:4px solid #5e5e5e;border-radius:4px;box-sizing:border-box"></div><svg class="ic" style="left:108.00px;top:507.00px" width="36" height="36" viewBox="0 0 24 24" fill="none" stroke="#000" stroke-width="2.3" stroke-linecap="round" stroke-linejoin="round"><path d="m9 18 6-6-6-6"/></svg><svg class="ic" style="left:220.00px;top:507.00px" width="36" height="36" viewBox="0 0 24 24" fill="none" stroke="#0a35a8" stroke-width="2" stroke-linecap="round" stroke-linejoin="round"><path d="M2.062 12.348a1 1 0 0 1 0-.696 10.750 10.750 0 0 1 19.876 0 1 1 0 0 1 0 .696 10.750 10.750 0 0 1-19.876 0"/><circle cx="12" cy="12" r="3"/></svg><svg class="ic" style="left:290.00px;top:507.00px" width="36" height="36" viewBox="0 0 24 24" fill="none" stroke="#111" stroke-width="2.4" stroke-linecap="round" stroke-linejoin="round"><circle cx="12" cy="12" r="1"/><circle cx="19" cy="12" r="1"/><circle cx="5" cy="12" r="1"/></svg><span class="t" style="left:380.00px;top:508px;font-size:31.31px;font-weight:400;color:#16181b;transform:scaleX(0.9711);letter-spacing:-0.84px;">1158456371</span><span class="t" style="left:595.00px;top:508px;font-size:31.31px;font-weight:400;color:#16181b;transform:scaleX(1.1021);">7/20/25, </span><span class="t" style="left:727.78px;top:508px;font-size:31.31px;font-weight:400;color:#16181b;transform:scaleX(1.0069);">7:08 </span><span class="t" style="left:797.23px;top:508px;font-size:31.31px;font-weight:400;color:#16181b;transform:scaleX(0.9937);">AM</span><span class="t" style="left:880.00px;top:508px;font-size:31.31px;font-weight:400;color:#16181b;transform:scaleX(1.1021);">7/20/25, </span><span class="t" style="left:1012.78px;top:508px;font-size:31.31px;font-weight:400;color:#16181b;transform:scaleX(0.9711);letter-spacing:-0.65px;">10:58 </span><span class="t" style="left:1094.44px;top:508px;font-size:31.31px;font-weight:400;color:#16181b;transform:scaleX(0.9937);">AM</span><span class="t" style="left:1172.50px;top:508px;font-size:31.31px;font-weight:400;color:#16181b;transform:scaleX(1.0766);">Remote</span><span class="t" style="left:1450.00px;top:508px;font-size:31.31px;font-weight:400;color:#16181b;transform:scaleX(1.0714);">Saturn22-Synergy-1</span><span class="t" style="left:1855.68px;top:508px;font-size:31.31px;font-weight:400;color:#16181b;transform:scaleX(0.8930);">B</span><span class="t" style="left:1979.50px;top:508px;font-size:31.31px;font-weight:400;color:#16181b;transform:scaleX(1.0732);">3h </span><span class="t" style="left:2024.97px;top:508px;font-size:31.31px;font-weight:400;color:#16181b;transform:scaleX(1.1411);">50m</span><span class="t" style="left:2157.00px;top:508px;font-size:31.31px;font-weight:400;color:#32a340;transform:scaleX(0.9711);letter-spacing:-4.76px;">1h </span><span class="t" style="left:2194.30px;top:508px;font-size:31.31px;font-weight:400;color:#32a340;transform:scaleX(0.9874);">10m </span><span class="t" style="left:2262.53px;top:508px;font-size:31.31px;font-weight:400;color:#32a340;transform:scaleX(0.9711);letter-spacing:-0.71px;">(31%)</span><div style="left:0px;top:566px;width:2388px;height:80px;background:#fff"></div><div style="left:0px;top:646px;width:2388px;height:2px;background:#d9dbe1"></div><div style="left:30px;top:588px;width:32px;height:32px;border:4px solid #5e5e5e;border-radius:4px;box-sizing:border-box"></div><svg class="ic" style="left:108.00px;top:589.00px" width="36" height="36" viewBox="0 0 24 24" fill="none" stroke="#000" stroke-width="2.3" stroke-linecap="round" stroke-linejoin="round"><path d="m9 18 6-6-6-6"/></svg><svg class="ic" style="left:220.00px;top:589.00px" width="36" height="36" viewBox="0 0 24 24" fill="none" stroke="#0a35a8" stroke-width="2" stroke-linecap="round" stroke-linejoin="round"><path d="M2.062 12.348a1 1 0 0 1 0-.696 10.750 10.750 0 0 1 19.876 0 1 1 0 0 1 0 .696 10.750 10.750 0 0 1-19.876 0"/><circle cx="12" cy="12" r="3"/></svg><svg class="ic" style="left:290.00px;top:589.00px" width="36" height="36" viewBox="0 0 24 24" fill="none" stroke="#111" stroke-width="2.4" stroke-linecap="round" stroke-linejoin="round"><circle cx="12" cy="12" r="1"/><circle cx="19" cy="12" r="1"/><circle cx="5" cy="12" r="1"/></svg><span class="t" style="left:380.00px;top:590px;font-size:31.31px;font-weight:400;color:#16181b;transform:scaleX(0.9790);">1566174856</span><span class="t" style="left:595.00px;top:590px;font-size:31.31px;font-weight:400;color:#16181b;transform:scaleX(1.1297);">6/30/25, </span><span class="t" style="left:730.92px;top:590px;font-size:31.31px;font-weight:400;color:#16181b;transform:scaleX(1.0303);">3:06 </span><span class="t" style="left:801.78px;top:590px;font-size:31.31px;font-weight:400;color:#16181b;transform:scaleX(0.9321);">PM</span><span class="t" style="left:880.00px;top:590px;font-size:31.31px;font-weight:400;color:#16181b;transform:scaleX(1.1297);">6/30/25, </span><span class="t" style="left:1015.92px;top:590px;font-size:31.31px;font-weight:400;color:#16181b;transform:scaleX(1.0303);">6:30 </span><span class="t" style="left:1086.78px;top:590px;font-size:31.31px;font-weight:400;color:#16181b;transform:scaleX(0.9321);">PM</span><span class="t" style="left:1172.50px;top:590px;font-size:31.31px;font-weight:400;color:#16181b;transform:scaleX(1.0766);">Remote</span><span class="t" style="left:1450.00px;top:590px;font-size:31.31px;font-weight:400;color:#16181b;transform:scaleX(1.0714);">Saturn22-Synergy-1</span><span class="t" style="left:1854.76px;top:590px;font-size:31.31px;font-weight:400;color:#16181b;transform:scaleX(0.9813);">A</span><span class="t" style="left:1979.50px;top:590px;font-size:31.31px;font-weight:400;color:#16181b;transform:scaleX(1.0732);">3h </span><span class="t" style="left:2024.97px;top:590px;font-size:31.31px;font-weight:400;color:#16181b;transform:scaleX(1.0952);">23m</span><span class="t" style="left:2157.00px;top:590px;font-size:31.31px;font-weight:400;color:#32a340;transform:scaleX(1.1152);">24m </span><span class="t" style="left:2233.02px;top:590px;font-size:31.31px;font-weight:400;color:#32a340;transform:scaleX(1.0734);">48s </span><span class="t" style="left:2295.28px;top:590px;font-size:31.31px;font-weight:400;color:#32a340;transform:scaleX(0.9711);letter-spacing:-0.82px;">(12%)</span><div style="left:0px;top:648px;width:2388px;height:80px;background:#f1f1f1"></div><div style="left:0px;top:728px;width:2388px;height:2px;background:#d9dbe1"></div><div style="left:30px;top:670px;width:32px;height:32px;border:4px solid #5e5e5e;border-radius:4px;box-sizing:border-box"></div><svg class="ic" style="left:108.00px;top:671.00px" width="36" height="36" viewBox="0 0 24 24" fill="none" stroke="#000" stroke-width="2.3" stroke-linecap="round" stroke-linejoin="round"><path d="m9 18 6-6-6-6"/></svg><svg class="ic" style="left:220.00px;top:671.00px" width="36" height="36" viewBox="0 0 24 24" fill="none" stroke="#0a35a8" stroke-width="2" stroke-linecap="round" stroke-linejoin="round"><path d="M2.062 12.348a1 1 0 0 1 0-.696 10.750 10.750 0 0 1 19.876 0 1 1 0 0 1 0 .696 10.750 10.750 0 0 1-19.876 0"/><circle cx="12" cy="12" r="3"/></svg><svg class="ic" style="left:290.00px;top:671.00px" width="36" height="36" viewBox="0 0 24 24" fill="none" stroke="#111" stroke-width="2.4" stroke-linecap="round" stroke-linejoin="round"><circle cx="12" cy="12" r="1"/><circle cx="19" cy="12" r="1"/><circle cx="5" cy="12" r="1"/></svg><span class="t" style="left:380.00px;top:672px;font-size:31.31px;font-weight:400;color:#16181b;transform:scaleX(0.9711);letter-spacing:-1.05px;">1178023519</span><span class="t" style="left:595.00px;top:672px;font-size:31.31px;font-weight:400;color:#16181b;transform:scaleX(1.1262);">6/24/25, </span><span class="t" style="left:730.52px;top:672px;font-size:31.31px;font-weight:400;color:#16181b;transform:scaleX(0.9711);letter-spacing:-2.90px;">3:17 </span><span class="t" style="left:789.33px;top:672px;font-size:31.31px;font-weight:400;color:#16181b;transform:scaleX(0.9321);">PM</span><span class="t" style="left:880.00px;top:672px;font-size:31.31px;font-weight:400;color:#16181b;transform:scaleX(1.1262);">6/24/25, </span><span class="t" style="left:1015.52px;top:672px;font-size:31.31px;font-weight:400;color:#16181b;transform:scaleX(0.9078);letter-spacing:-2.92px;">6:11 </span><span class="t" style="left:1068.86px;top:672px;font-size:31.31px;font-weight:400;color:#16181b;transform:scaleX(0.9321);">PM</span><span class="t" style="left:1172.50px;top:672px;font-size:31.31px;font-weight:400;color:#16181b;transform:scaleX(1.0766);">Remote</span><span class="t" style="left:1450.00px;top:672px;font-size:31.31px;font-weight:400;color:#16181b;transform:scaleX(1.0714);">Saturn22-Synergy-1</span><span class="t" style="left:1854.76px;top:672px;font-size:31.31px;font-weight:400;color:#16181b;transform:scaleX(0.9813);">A</span><span class="t" style="left:1979.50px;top:672px;font-size:31.31px;font-weight:400;color:#16181b;transform:scaleX(1.0610);">2h </span><span class="t" style="left:2024.55px;top:672px;font-size:31.31px;font-weight:400;color:#16181b;transform:scaleX(1.1216);">53m</span><span class="t" style="left:2157.00px;top:672px;font-size:31.31px;font-weight:400;color:#32a340;transform:scaleX(1.0396);">24s </span><span class="t" style="left:2217.58px;top:672px;font-size:31.31px;font-weight:400;color:#32a340;transform:scaleX(1.0556);">(0%)</span><div style="left:0px;top:730px;width:2388px;height:80px;background:#fff"></div><div style="left:0px;top:810px;width:2388px;height:2px;background:#d9dbe1"></div><div style="left:30px;top:752px;width:32px;height:32px;border:4px solid #5e5e5e;border-radius:4px;box-sizing:border-box"></div><svg class="ic" style="left:108.00px;top:753.00px" width="36" height="36" viewBox="0 0 24 24" fill="none" stroke="#000" stroke-width="2.3" stroke-linecap="round" stroke-linejoin="round"><path d="m9 18 6-6-6-6"/></svg><svg class="ic" style="left:220.00px;top:753.00px" width="36" height="36" viewBox="0 0 24 24" fill="none" stroke="#0a35a8" stroke-width="2" stroke-linecap="round" stroke-linejoin="round"><path d="M2.062 12.348a1 1 0 0 1 0-.696 10.750 10.750 0 0 1 19.876 0 1 1 0 0 1 0 .696 10.750 10.750 0 0 1-19.876 0"/><circle cx="12" cy="12" r="3"/></svg><svg class="ic" style="left:290.00px;top:753.00px" width="36" height="36" viewBox="0 0 24 24" fill="none" stroke="#111" stroke-width="2.4" stroke-linecap="round" stroke-linejoin="round"><circle cx="12" cy="12" r="1"/><circle cx="19" cy="12" r="1"/><circle cx="5" cy="12" r="1"/></svg><span class="t" style="left:380.00px;top:754px;font-size:31.31px;font-weight:400;color:#16181b;transform:scaleX(1.0594);">425498322</span><span class="t" style="left:595.00px;top:754px;font-size:31.31px;font-weight:400;color:#16181b;transform:scaleX(1.0575);">6/15/25, </span><span class="t" style="left:722.73px;top:754px;font-size:31.31px;font-weight:400;color:#16181b;transform:scaleX(0.9711);letter-spacing:-2.18px;">1:24 </span><span class="t" style="left:783.64px;top:754px;font-size:31.31px;font-weight:400;color:#16181b;transform:scaleX(0.9321);">PM</span><span class="t" style="left:880.00px;top:754px;font-size:31.31px;font-weight:400;color:#16181b;transform:scaleX(1.0575);">6/15/25, </span><span class="t" style="left:1007.73px;top:754px;font-size:31.31px;font-weight:400;color:#16181b;transform:scaleX(1.0272);">4:30 </span><span class="t" style="left:1078.42px;top:754px;font-size:31.31px;font-weight:400;color:#16181b;transform:scaleX(0.9321);">PM</span><span class="t" style="left:1172.50px;top:754px;font-size:31.31px;font-weight:400;color:#16181b;transform:scaleX(1.0766);">Remote</span><span class="t" style="left:1450.00px;top:754px;font-size:31.31px;font-weight:400;color:#16181b;transform:scaleX(1.0714);">Saturn22-Synergy-1</span><span class="t" style="left:1854.76px;top:754px;font-size:31.31px;font-weight:400;color:#16181b;transform:scaleX(0.9813);">A</span><span class="t" style="left:1979.50px;top:754px;font-size:31.31px;font-weight:400;color:#16181b;transform:scaleX(1.0732);">3h </span><span class="t" style="left:2024.97px;top:754px;font-size:31.31px;font-weight:400;color:#16181b;transform:scaleX(1.1639);">6m</span><span class="t" style="left:2157.00px;top:754px;font-size:31.31px;font-weight:400;color:#32a340;transform:scaleX(1.1017);">7m </span><span class="t" style="left:2213.02px;top:754px;font-size:31.31px;font-weight:400;color:#32a340;transform:scaleX(1.0709);">50s </span><span class="t" style="left:2275.17px;top:754px;font-size:31.31px;font-weight:400;color:#32a340;transform:scaleX(1.0560);">(4%)</span><div style="left:0px;top:812px;width:2388px;height:80px;background:#f1f1f1"></div><div style="left:0px;top:892px;width:2388px;height:2px;background:#d9dbe1"></div><div style="left:30px;top:834px;width:32px;height:32px;border:4px solid #5e5e5e;border-radius:4px;box-sizing:border-box"></div><svg class="ic" style="left:108.00px;top:835.00px" width="36" height="36" viewBox="0 0 24 24" fill="none" stroke="#000" stroke-width="2.3" stroke-linecap="round" stroke-linejoin="round"><path d="m9 18 6-6-6-6"/></svg><svg class="ic" style="left:220.00px;top:835.00px" width="36" height="36" viewBox="0 0 24 24" fill="none" stroke="#0a35a8" stroke-width="2" stroke-linecap="round" stroke-linejoin="round"><path d="M2.062 12.348a1 1 0 0 1 0-.696 10.750 10.750 0 0 1 19.876 0 1 1 0 0 1 0 .696 10.750 10.750 0 0 1-19.876 0"/><circle cx="12" cy="12" r="3"/></svg><svg class="ic" style="left:290.00px;top:835.00px" width="36" height="36" viewBox="0 0 24 24" fill="none" stroke="#111" stroke-width="2.4" stroke-linecap="round" stroke-linejoin="round"><circle cx="12" cy="12" r="1"/><circle cx="19" cy="12" r="1"/><circle cx="5" cy="12" r="1"/></svg><span class="t" style="left:380.00px;top:836px;font-size:31.31px;font-weight:400;color:#16181b;transform:scaleX(1.0347);">1666984796</span><span class="t" style="left:595.00px;top:836px;font-size:31.31px;font-weight:400;color:#16181b;transform:scaleX(1.1243);">5/24/25, </span><span class="t" style="left:730.31px;top:836px;font-size:31.31px;font-weight:400;color:#16181b;transform:scaleX(1.0303);">6:35 </span><span class="t" style="left:801.17px;top:836px;font-size:31.31px;font-weight:400;color:#16181b;transform:scaleX(0.9937);">AM</span><span class="t" style="left:880.00px;top:836px;font-size:31.31px;font-weight:400;color:#16181b;transform:scaleX(1.1243);">5/24/25, </span><span class="t" style="left:1015.31px;top:836px;font-size:31.31px;font-weight:400;color:#16181b;transform:scaleX(0.9394);letter-spacing:-2.57px;">11:33 </span><span class="t" style="left:1085.14px;top:836px;font-size:31.31px;font-weight:400;color:#16181b;transform:scaleX(0.9937);">AM</span><span class="t" style="left:1172.50px;top:836px;font-size:31.31px;font-weight:400;color:#16181b;transform:scaleX(1.0766);">Remote</span><span class="t" style="left:1450.00px;top:836px;font-size:31.31px;font-weight:400;color:#16181b;transform:scaleX(1.0714);">Saturn22-Synergy-1</span><span class="t" style="left:1854.76px;top:836px;font-size:31.31px;font-weight:400;color:#16181b;transform:scaleX(0.9813);">A</span><span class="t" style="left:1979.50px;top:836px;font-size:31.31px;font-weight:400;color:#16181b;transform:scaleX(1.1082);">4h </span><span class="t" style="left:2026.19px;top:836px;font-size:31.31px;font-weight:400;color:#16181b;transform:scaleX(1.1427);">58m</span><span class="t" style="left:2157.00px;top:836px;font-size:31.31px;font-weight:400;color:#f0ad2c;transform:scaleX(1.0610);">2h </span><span class="t" style="left:2202.05px;top:836px;font-size:31.31px;font-weight:400;color:#f0ad2c;transform:scaleX(1.0646);">(40%)</span><div style="left:0px;top:894px;width:2388px;height:80px;background:#fff"></div><div style="left:0px;top:974px;width:2388px;height:2px;background:#d9dbe1"></div><div style="left:30px;top:916px;width:32px;height:32px;border:4px solid #5e5e5e;border-radius:4px;box-sizing:border-box"></div><svg class="ic" style="left:108.00px;top:917.00px" width="36" height="36" viewBox="0 0 24 24" fill="none" stroke="#000" stroke-width="2.3" stroke-linecap="round" stroke-linejoin="round"><path d="m9 18 6-6-6-6"/></svg><svg class="ic" style="left:220.00px;top:917.00px" width="36" height="36" viewBox="0 0 24 24" fill="none" stroke="#0a35a8" stroke-width="2" stroke-linecap="round" stroke-linejoin="round"><path d="M2.062 12.348a1 1 0 0 1 0-.696 10.750 10.750 0 0 1 19.876 0 1 1 0 0 1 0 .696 10.750 10.750 0 0 1-19.876 0"/><circle cx="12" cy="12" r="3"/></svg><svg class="ic" style="left:290.00px;top:917.00px" width="36" height="36" viewBox="0 0 24 24" fill="none" stroke="#111" stroke-width="2.4" stroke-linecap="round" stroke-linejoin="round"><circle cx="12" cy="12" r="1"/><circle cx="19" cy="12" r="1"/><circle cx="5" cy="12" r="1"/></svg><span class="t" style="left:380.00px;top:918px;font-size:31.31px;font-weight:400;color:#16181b;transform:scaleX(1.0242);">1538467584</span><span class="t" style="left:595.00px;top:918px;font-size:31.31px;font-weight:400;color:#16181b;transform:scaleX(1.0555);">5/15/25, </span><span class="t" style="left:722.53px;top:918px;font-size:31.31px;font-weight:400;color:#16181b;transform:scaleX(1.0003);">5:23 </span><span class="t" style="left:791.58px;top:918px;font-size:31.31px;font-weight:400;color:#16181b;transform:scaleX(0.9937);">AM</span><span class="t" style="left:880.00px;top:918px;font-size:31.31px;font-weight:400;color:#16181b;transform:scaleX(1.0555);">5/15/25, </span><span class="t" style="left:1007.53px;top:918px;font-size:31.31px;font-weight:400;color:#16181b;transform:scaleX(0.9711);letter-spacing:-0.64px;">10:48 </span><span class="t" style="left:1089.22px;top:918px;font-size:31.31px;font-weight:400;color:#16181b;transform:scaleX(0.9937);">AM</span><span class="t" style="left:1172.50px;top:918px;font-size:31.31px;font-weight:400;color:#16181b;transform:scaleX(1.0766);">Remote</span><span class="t" style="left:1450.00px;top:918px;font-size:31.31px;font-weight:400;color:#16181b;transform:scaleX(1.0714);">Saturn22-Synergy-1</span><span class="t" style="left:1854.76px;top:918px;font-size:31.31px;font-weight:400;color:#16181b;transform:scaleX(0.9813);">A</span><span class="t" style="left:1979.50px;top:918px;font-size:31.31px;font-weight:400;color:#16181b;transform:scaleX(1.1073);">5h </span><span class="t" style="left:2026.16px;top:918px;font-size:31.31px;font-weight:400;color:#16181b;transform:scaleX(1.1152);">24m</span><span class="t" style="left:2157.00px;top:918px;font-size:31.31px;font-weight:400;color:#f0ad2c;transform:scaleX(1.0610);">2h </span><span class="t" style="left:2202.05px;top:918px;font-size:31.31px;font-weight:400;color:#f0ad2c;transform:scaleX(1.1152);">24m </span><span class="t" style="left:2278.05px;top:918px;font-size:31.31px;font-weight:400;color:#f0ad2c;transform:scaleX(1.0646);">(45%)</span><div style="left:0px;top:976px;width:2388px;height:80px;background:#f1f1f1"></div><div style="left:0px;top:1056px;width:2388px;height:2px;background:#d9dbe1"></div><div style="left:30px;top:998px;width:32px;height:32px;border:4px solid #5e5e5e;border-radius:4px;box-sizing:border-box"></div><svg class="ic" style="left:108.00px;top:999.00px" width="36" height="36" viewBox="0 0 24 24" fill="none" stroke="#000" stroke-width="2.3" stroke-linecap="round" stroke-linejoin="round"><path d="m9 18 6-6-6-6"/></svg><svg class="ic" style="left:220.00px;top:999.00px" width="36" height="36" viewBox="0 0 24 24" fill="none" stroke="#0a35a8" stroke-width="2" stroke-linecap="round" stroke-linejoin="round"><path d="M2.062 12.348a1 1 0 0 1 0-.696 10.750 10.750 0 0 1 19.876 0 1 1 0 0 1 0 .696 10.750 10.750 0 0 1-19.876 0"/><circle cx="12" cy="12" r="3"/></svg><svg class="ic" style="left:290.00px;top:999.00px" width="36" height="36" viewBox="0 0 24 24" fill="none" stroke="#111" stroke-width="2.4" stroke-linecap="round" stroke-linejoin="round"><circle cx="12" cy="12" r="1"/><circle cx="19" cy="12" r="1"/><circle cx="5" cy="12" r="1"/></svg><span class="t" style="left:380.00px;top:1000px;font-size:31.31px;font-weight:400;color:#16181b;transform:scaleX(1.0129);">992391593</span><span class="t" style="left:595.00px;top:1000px;font-size:31.31px;font-weight:400;color:#16181b;transform:scaleX(1.0555);">5/15/25, </span><span class="t" style="left:722.53px;top:1000px;font-size:31.31px;font-weight:400;color:#16181b;transform:scaleX(1.0498);">5:06 </span><span class="t" style="left:794.58px;top:1000px;font-size:31.31px;font-weight:400;color:#16181b;transform:scaleX(0.9937);">AM</span><span class="t" style="left:880.00px;top:1000px;font-size:31.31px;font-weight:400;color:#16181b;transform:scaleX(1.0555);">5/15/25, </span><span class="t" style="left:1007.53px;top:1000px;font-size:31.31px;font-weight:400;color:#16181b;transform:scaleX(0.9711);letter-spacing:-1.64px;">5:10 </span><span class="t" style="left:1070.02px;top:1000px;font-size:31.31px;font-weight:400;color:#16181b;transform:scaleX(0.9937);">AM</span><span class="t" style="left:1172.50px;top:1000px;font-size:31.31px;font-weight:400;color:#16181b;transform:scaleX(1.0766);">Remote</span><span class="t" style="left:1450.00px;top:1000px;font-size:31.31px;font-weight:400;color:#16181b;transform:scaleX(1.0714);">Saturn22-Synergy-1</span><span class="t" style="left:1854.76px;top:1000px;font-size:31.31px;font-weight:400;color:#16181b;transform:scaleX(0.9813);">A</span><span class="t" style="left:1979.50px;top:1000px;font-size:31.31px;font-weight:400;color:#16181b;transform:scaleX(1.1595);">4m </span><span class="t" style="left:2038.05px;top:1000px;font-size:31.31px;font-weight:400;color:#16181b;transform:scaleX(0.9820);">7s</span><span class="t" style="left:2157.00px;top:1000px;font-size:31.31px;font-weight:400;color:#32a340;transform:scaleX(1.1315);">3m </span><span class="t" style="left:2214.33px;top:1000px;font-size:31.31px;font-weight:400;color:#32a340;transform:scaleX(1.0581);">4s </span><span class="t" style="left:2257.42px;top:1000px;font-size:31.31px;font-weight:400;color:#32a340;transform:scaleX(1.0346);">(74%)</span><div style="left:0px;top:1058px;width:2388px;height:80px;background:#fff"></div><div style="left:0px;top:1138px;width:2388px;height:2px;background:#d9dbe1"></div><div style="left:30px;top:1080px;width:32px;height:32px;border:4px solid #5e5e5e;border-radius:4px;box-sizing:border-box"></div><svg class="ic" style="left:108.00px;top:1081.00px" width="36" height="36" viewBox="0 0 24 24" fill="none" stroke="#000" stroke-width="2.3" stroke-linecap="round" stroke-linejoin="round"><path d="m9 18 6-6-6-6"/></svg><svg class="ic" style="left:220.00px;top:1081.00px" width="36" height="36" viewBox="0 0 24 24" fill="none" stroke="#0a35a8" stroke-width="2" stroke-linecap="round" stroke-linejoin="round"><path d="M2.062 12.348a1 1 0 0 1 0-.696 10.750 10.750 0 0 1 19.876 0 1 1 0 0 1 0 .696 10.750 10.750 0 0 1-19.876 0"/><circle cx="12" cy="12" r="3"/></svg><svg class="ic" style="left:290.00px;top:1081.00px" width="36" height="36" viewBox="0 0 24 24" fill="none" stroke="#111" stroke-width="2.4" stroke-linecap="round" stroke-linejoin="round"><circle cx="12" cy="12" r="1"/><circle cx="19" cy="12" r="1"/><circle cx="5" cy="12" r="1"/></svg><span class="t" style="left:380.00px;top:1082px;font-size:31.31px;font-weight:400;color:#16181b;transform:scaleX(1.0527);">2097743095</span><span class="t" style="left:595.00px;top:1082px;font-size:31.31px;font-weight:400;color:#16181b;transform:scaleX(1.0413);">5/12/25, </span><span class="t" style="left:720.92px;top:1082px;font-size:31.31px;font-weight:400;color:#16181b;transform:scaleX(1.0487);">4:48 </span><span class="t" style="left:792.91px;top:1082px;font-size:31.31px;font-weight:400;color:#16181b;transform:scaleX(0.9321);">PM</span><span class="t" style="left:880.00px;top:1082px;font-size:31.31px;font-weight:400;color:#16181b;transform:scaleX(1.0413);">5/12/25, </span><span class="t" style="left:1005.92px;top:1082px;font-size:31.31px;font-weight:400;color:#16181b;transform:scaleX(0.9711);letter-spacing:-1.64px;">5:51 </span><span class="t" style="left:1068.41px;top:1082px;font-size:31.31px;font-weight:400;color:#16181b;transform:scaleX(0.9321);">PM</span><span class="t" style="left:1172.50px;top:1082px;font-size:31.31px;font-weight:400;color:#16181b;transform:scaleX(1.0766);">Remote</span><span class="t" style="left:1450.00px;top:1082px;font-size:31.31px;font-weight:400;color:#16181b;transform:scaleX(1.0714);">Saturn22-Synergy-1</span><span class="t" style="left:1854.76px;top:1082px;font-size:31.31px;font-weight:400;color:#16181b;transform:scaleX(0.9813);">A</span><span class="t" style="left:1979.50px;top:1082px;font-size:31.31px;font-weight:400;color:#16181b;transform:scaleX(0.9711);letter-spacing:-4.76px;">1h </span><span class="t" style="left:2016.80px;top:1082px;font-size:31.31px;font-weight:400;color:#16181b;transform:scaleX(1.1218);">2m</span><span class="t" style="left:2157.00px;top:1082px;font-size:31.31px;font-weight:400;color:#32a340;transform:scaleX(1.1315);">3m </span><span class="t" style="left:2214.33px;top:1082px;font-size:31.31px;font-weight:400;color:#32a340;transform:scaleX(1.0638);">6s </span><span class="t" style="left:2257.59px;top:1082px;font-size:31.31px;font-weight:400;color:#32a340;transform:scaleX(1.0556);">(5%)</span><div style="left:0px;top:1140px;width:2388px;height:80px;background:#f1f1f1"></div><div style="left:0px;top:1220px;width:2388px;height:2px;background:#d9dbe1"></div><div style="left:30px;top:1162px;width:32px;height:32px;border:4px solid #5e5e5e;border-radius:4px;box-sizing:border-box"></div><svg class="ic" style="left:108.00px;top:1163.00px" width="36" height="36" viewBox="0 0 24 24" fill="none" stroke="#000" stroke-width="2.3" stroke-linecap="round" stroke-linejoin="round"><path d="m9 18 6-6-6-6"/></svg><svg class="ic" style="left:220.00px;top:1163.00px" width="36" height="36" viewBox="0 0 24 24" fill="none" stroke="#0a35a8" stroke-width="2" stroke-linecap="round" stroke-linejoin="round"><path d="M2.062 12.348a1 1 0 0 1 0-.696 10.750 10.750 0 0 1 19.876 0 1 1 0 0 1 0 .696 10.750 10.750 0 0 1-19.876 0"/><circle cx="12" cy="12" r="3"/></svg><svg class="ic" style="left:290.00px;top:1163.00px" width="36" height="36" viewBox="0 0 24 24" fill="none" stroke="#111" stroke-width="2.4" stroke-linecap="round" stroke-linejoin="round"><circle cx="12" cy="12" r="1"/><circle cx="19" cy="12" r="1"/><circle cx="5" cy="12" r="1"/></svg><span class="t" style="left:380.00px;top:1164px;font-size:31.31px;font-weight:400;color:#16181b;transform:scaleX(0.9711);letter-spacing:-1.09px;">1081631875</span><span class="t" style="left:595.00px;top:1164px;font-size:31.31px;font-weight:400;color:#16181b;transform:scaleX(0.9932);">5/11/25, </span><span class="t" style="left:713.17px;top:1164px;font-size:31.31px;font-weight:400;color:#16181b;transform:scaleX(1.0092);">7:46 </span><span class="t" style="left:782.77px;top:1164px;font-size:31.31px;font-weight:400;color:#16181b;transform:scaleX(0.9937);">AM</span><span class="t" style="left:880.00px;top:1164px;font-size:31.31px;font-weight:400;color:#16181b;transform:scaleX(0.9932);">5/11/25, </span><span class="t" style="left:998.17px;top:1164px;font-size:31.31px;font-weight:400;color:#16181b;transform:scaleX(1.0069);">8:57 </span><span class="t" style="left:1067.61px;top:1164px;font-size:31.31px;font-weight:400;color:#16181b;transform:scaleX(0.9321);">PM</span><span class="t" style="left:1172.50px;top:1164px;font-size:31.31px;font-weight:400;color:#16181b;transform:scaleX(1.0766);">Remote</span><span class="t" style="left:1450.00px;top:1164px;font-size:31.31px;font-weight:400;color:#16181b;transform:scaleX(1.0714);">Saturn22-Synergy-1</span><span class="t" style="left:1854.76px;top:1164px;font-size:31.31px;font-weight:400;color:#16181b;transform:scaleX(0.9813);">A</span><span class="t" style="left:1979.50px;top:1164px;font-size:31.31px;font-weight:400;color:#16181b;transform:scaleX(0.9711);letter-spacing:-1.87px;">13h </span><span class="t" style="left:2034.70px;top:1164px;font-size:31.31px;font-weight:400;color:#16181b;transform:scaleX(0.9874);">10m</span><span class="t" style="left:2157.00px;top:1164px;font-size:31.31px;font-weight:400;color:#c4161c;transform:scaleX(1.1091);">9h </span><span class="t" style="left:2203.72px;top:1164px;font-size:31.31px;font-weight:400;color:#c4161c;transform:scaleX(0.9711);letter-spacing:-1.23px;">1m </span><span class="t" style="left:2252.86px;top:1164px;font-size:31.31px;font-weight:400;color:#c4161c;transform:scaleX(1.0674);">(69%)</span></div><div style="left:2938px;top:542px;width:16px;height:1180px;background:#fafafa"></div><div style="left:2938px;top:542px;width:16px;height:631px;background:#8b8b8b"></div><div style="left:550px;top:1722px;width:2404px;height:126px;background:#f9f9f9"></div><div style="left:550px;top:1722px;width:1365px;height:16px;background:#8b8b8b"></div><div style="left:2938px;top:1722px;width:16px;height:16px;background:#fff"></div><span class="t" style="left:570.00px;top:1763px;font-size:28.84px;font-weight:400;color:#111;transform:scaleX(1.0607);">Selected: </span><span class="t" style="left:704.97px;top:1763px;font-size:28.84px;font-weight:400;color:#111;transform:scaleX(1.0964);">0  </span><span class="t" style="left:737.50px;top:1763px;font-size:28.84px;font-weight:400;color:#111;transform:scaleX(1.0769);">Duration: </span><span class="t" style="left:870.95px;top:1763px;font-size:28.84px;font-weight:400;color:#111;transform:scaleX(1.1393);">4d </span><span class="t" style="left:914.97px;top:1763px;font-size:28.84px;font-weight:400;color:#111;transform:scaleX(0.9711);letter-spacing:-1.11px;">18h </span><span class="t" style="left:967.00px;top:1763px;font-size:28.84px;font-weight:400;color:#111;transform:scaleX(1.0875);">| </span><span class="t" style="left:982.62px;top:1763px;font-size:28.84px;font-weight:400;color:#111;transform:scaleX(1.1014);">Inactivity: </span><span class="t" style="left:1122.42px;top:1763px;font-size:28.84px;font-weight:400;color:#111;transform:scaleX(1.0921);">2d </span><span class="t" style="left:1164.92px;top:1763px;font-size:28.84px;font-weight:400;color:#111;transform:scaleX(1.1072);">5h </span><span class="t" style="left:1207.91px;top:1763px;font-size:28.84px;font-weight:400;color:#111;transform:scaleX(1.0672);">(46%) </span><span class="t" style="left:1297.45px;top:1763px;font-size:28.84px;font-weight:400;color:#111;transform:scaleX(1.0875);">| </span><span class="t" style="left:1313.08px;top:1763px;font-size:28.84px;font-weight:400;color:#111;transform:scaleX(1.1056);">Consumption: </span><span class="t" style="left:1517.20px;top:1763px;font-size:28.84px;font-weight:400;color:#111;transform:scaleX(1.0390);">622 </span><span class="t" style="left:1574.66px;top:1763px;font-size:28.84px;font-weight:400;color:#111;transform:scaleX(1.0232);">kW.h </span><span class="t" style="left:1647.67px;top:1763px;font-size:28.84px;font-weight:400;color:#111;transform:scaleX(1.0875);">| </span><span class="t" style="left:1663.30px;top:1763px;font-size:28.84px;font-weight:400;color:#111;transform:scaleX(1.0023);">Price: </span><span class="t" style="left:1744.64px;top:1763px;font-size:28.84px;font-weight:400;color:#111;transform:scaleX(1.0192);">A$367.03</span><span class="t" style="left:2773.39px;top:1763px;font-size:28.84px;font-weight:400;color:#111;transform:scaleX(1.0339);">Records: </span><span class="t" style="left:2900.12px;top:1763px;font-size:28.84px;font-weight:400;color:#111;transform:scaleX(1.0565);">26</span><div style="left:530px;top:166px;width:2416px;height:353px;border:8px solid #d0021b;border-radius:4px;box-sizing:border-box"></div>
</div>
</div>
</body></html>
